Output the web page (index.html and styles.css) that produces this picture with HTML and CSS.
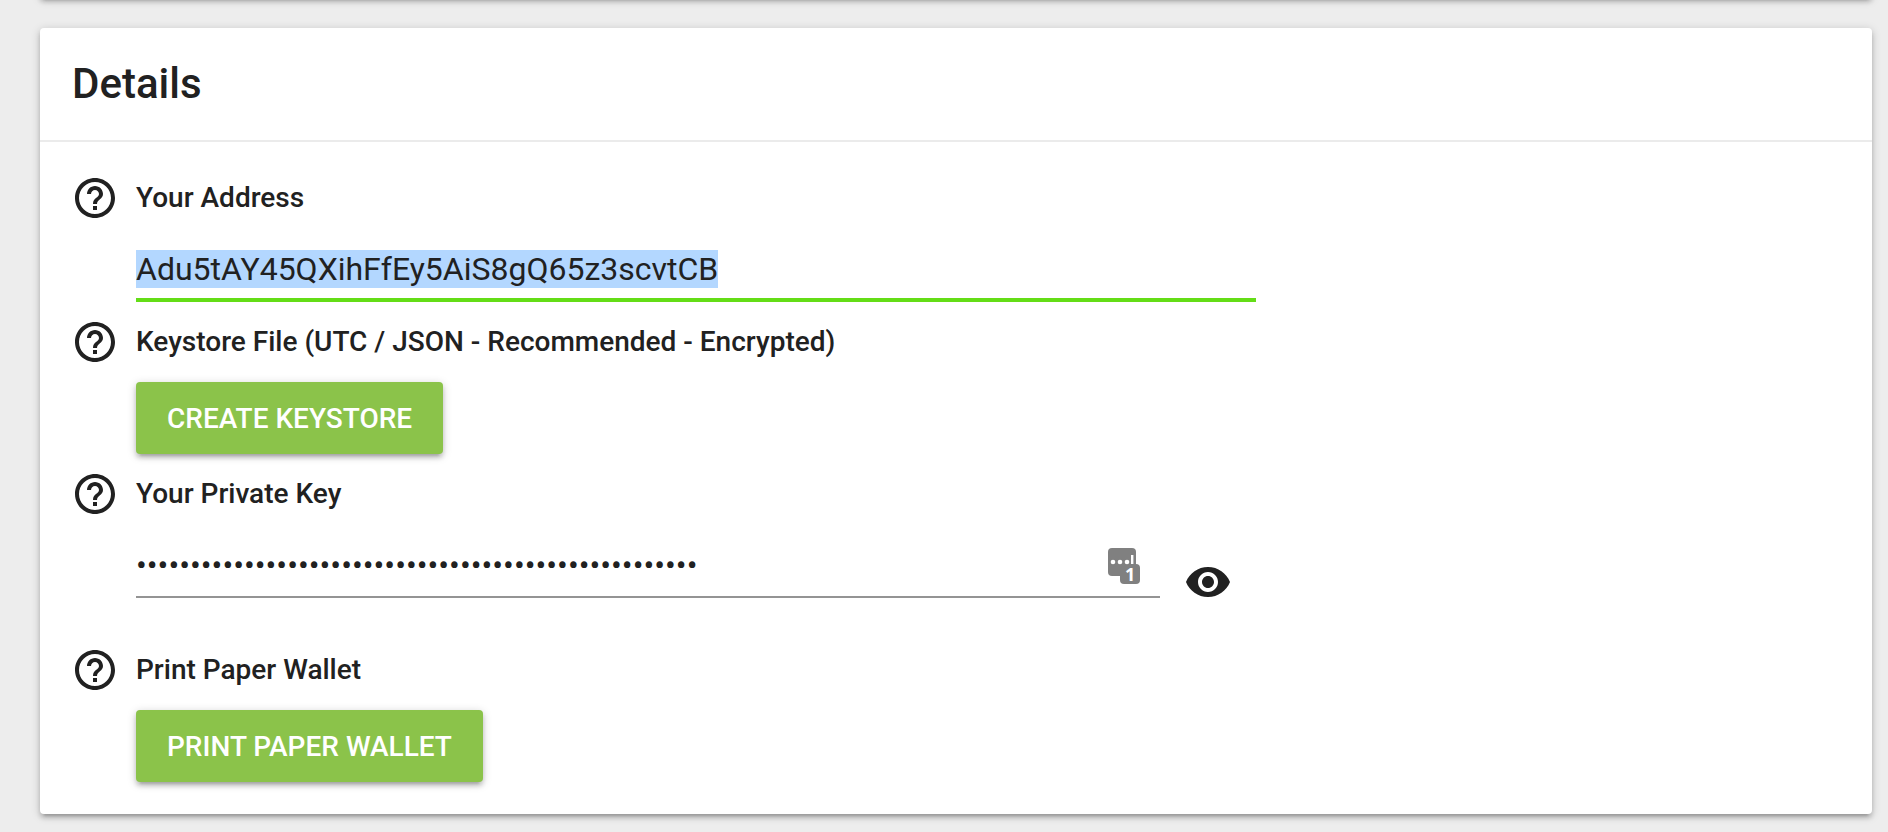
FILE: index.html
```html
<!DOCTYPE html>
<html lang="en">

<head>
    <meta charset="UTF-8">
    <meta name="viewport" content="width=device-width, initial-scale=1.0">
    <title>Wallet Details</title>
    <link rel="stylesheet" href="styles.css">
</head>

<body>
    <svg class="sprite" aria-hidden="true">
        <symbol id="help" viewBox="0 0 24 24">
            <path d="M11 18h2v-2h-2v2zm1-16C6.48 2 2 6.48 2 12s4.48 10 10 10 10-4.48 10-10S17.52 2 12 2zm0 18c-4.41 0-8-3.59-8-8s3.59-8 8-8 8 3.59 8 8-3.59 8-8 8zm0-14c-2.21 0-4 1.79-4 4h2c0-1.1.9-2 2-2s2 .9 2 2c0 2-3 1.75-3 5h2c0-2.25 3-2.5 3-5 0-2.21-1.79-4-4-4z"/>
        </symbol>
    </svg>

    <main class="page">
        <section class="card card-previous"></section>

        <section class="card">
            <header class="card-header">
                <h1>Details</h1>
            </header>

            <div class="card-body">
                <div class="row">
                    <svg class="icon"><use href="#help"/></svg>
                    <label class="label" for="address">Your Address</label>
                    <div class="content">
                        <input class="text-field focused" type="text" id="address" value="Adu5tAY45QXihFfEy5AiS8gQ65z3scvtCB" spellcheck="false" readonly>
                    </div>
                </div>

                <div class="row">
                    <svg class="icon"><use href="#help"/></svg>
                    <label class="label" for="createKeystore">Keystore File (UTC / JSON - Recommended - Encrypted)</label>
                    <div class="content">
                        <button class="btn" id="createKeystore" type="button">CREATE KEYSTORE</button>
                    </div>
                </div>

                <div class="row row-key">
                    <svg class="icon"><use href="#help"/></svg>
                    <label class="label" for="privateKey">Your Private Key</label>
                    <div class="content key-line">
                        <div class="key-field">
                            <input class="text-field" type="password" id="privateKey" value="0123456789012345678901234567890123456789012345678901" readonly>
                            <svg class="manager" viewBox="0 0 32 36">
                                <rect width="28" height="28" rx="4"/>
                                <rect x="12" y="16" width="20" height="20" rx="4"/>
                                <g fill="#fff">
                                    <circle cx="5" cy="14" r="2.3"/>
                                    <circle cx="12" cy="14" r="2.3"/>
                                    <circle cx="19" cy="14" r="2.3"/>
                                    <rect x="23" y="7" width="2.4" height="9"/>
                                    <text x="17" y="33" font-size="18">1</text>
                                </g>
                            </svg>
                        </div>
                        <button class="btn-icon" type="button" aria-label="Show private key">
                            <svg class="icon" viewBox="0 0 24 24">
                                <path d="M12 4.5C7 4.5 2.73 7.61 1 12c1.73 4.39 6 7.5 11 7.5s9.27-3.11 11-7.5c-1.73-4.39-6-7.5-11-7.5zM12 17c-2.76 0-5-2.24-5-5s2.24-5 5-5 5 2.24 5 5-2.24 5-5 5zm0-8c-1.66 0-3 1.34-3 3s1.34 3 3 3 3-1.34 3-3-1.34-3-3-3z"/>
                            </svg>
                        </button>
                    </div>
                </div>

                <div class="row">
                    <svg class="icon"><use href="#help"/></svg>
                    <label class="label" for="printWallet">Print Paper Wallet</label>
                    <div class="content">
                        <button class="btn" id="printWallet" type="button">PRINT PAPER WALLET</button>
                    </div>
                </div>
            </div>
        </section>
    </main>

    <script>
        // select the address so it is ready to copy
        const address = document.getElementById('address');
        address.focus();
        address.select();
    </script>
</body>

</html>
```
FILE: styles.css
```css
* {
    box-sizing: border-box;
}

body {
    margin: 0;
    font-family: Roboto, "Liberation Sans", sans-serif;
    color: #212121;
    background-color: #ededed;
}

.sprite {
    display: none;
}

.page {
    display: flow-root;
    padding: 0 16px 16px 40px;
}

.card {
    background: #fff;
    border-radius: 4px;
    box-shadow: 0 2px 10px rgba(0, 0, 0, 0.2), 0 4px 4px rgba(0, 0, 0, 0.14), 0 6px 2px -4px rgba(0, 0, 0, 0.12);
}

/* tail of the card above */
.card-previous {
    height: 28px;
    margin-top: -30px;
    margin-bottom: 30px;
}

.card-header {
    padding: 30px 32px;
    border-bottom: 2px solid #ebebeb;
}

h1 {
    margin: 0;
    font-size: 42px;
    font-weight: 500;
    line-height: 52px;
}

.card-body {
    display: flex;
    flex-direction: column;
    gap: 16px;
    padding: 32px 30px;
}

.row {
    display: grid;
    grid-template-columns: 50px 1fr;
    column-gap: 16px;
}

.row-key {
    margin-bottom: 24px;
}

.icon {
    display: block;
    width: 48px;
    height: 48px;
    justify-self: center;
    fill: #212121;
}

.label {
    font-size: 28px;
    font-weight: 500;
    line-height: 48px;
}

.content {
    grid-column: 2;
    max-width: 1120px;
}

.text-field {
    display: block;
    width: 100%;
    height: 80px;
    margin: 0;
    padding: 28px 0 12px;
    border: none;
    border-bottom: 2px solid #949494;
    outline: none;
    background: transparent;
    color: #212121;
    font-family: inherit;
    font-size: 32px;
}

.text-field.focused {
    padding-bottom: 10px;
    border-bottom: 4px solid #64dd17;
}

.text-field::selection {
    background: #b3d7ff;
    color: #212121;
}

.key-line {
    display: flex;
    gap: 24px;
    padding-right: 24px;
}

.key-field {
    position: relative;
    flex: 1;
}

.manager {
    position: absolute;
    top: 30px;
    right: 20px;
    width: 32px;
    height: 36px;
    overflow: visible;
    fill: #808080;
    font-family: "Open Sans", sans-serif;
    font-weight: bold;
}

.btn-icon {
    margin-top: 40px;
    padding: 0;
    border: none;
    background: none;
    cursor: pointer;
}

.btn {
    display: block;
    height: 72px;
    margin-top: 16px;
    padding: 0 31px;
    border: none;
    border-radius: 4px;
    background-color: #8bc34a;
    color: #fff;
    font-family: inherit;
    font-size: 28px;
    font-weight: 500;
    cursor: pointer;
    box-shadow: 0 2px 10px rgba(0, 0, 0, 0.2), 0 4px 4px rgba(0, 0, 0, 0.14), 0 6px 2px -4px rgba(0, 0, 0, 0.12);
}
```
